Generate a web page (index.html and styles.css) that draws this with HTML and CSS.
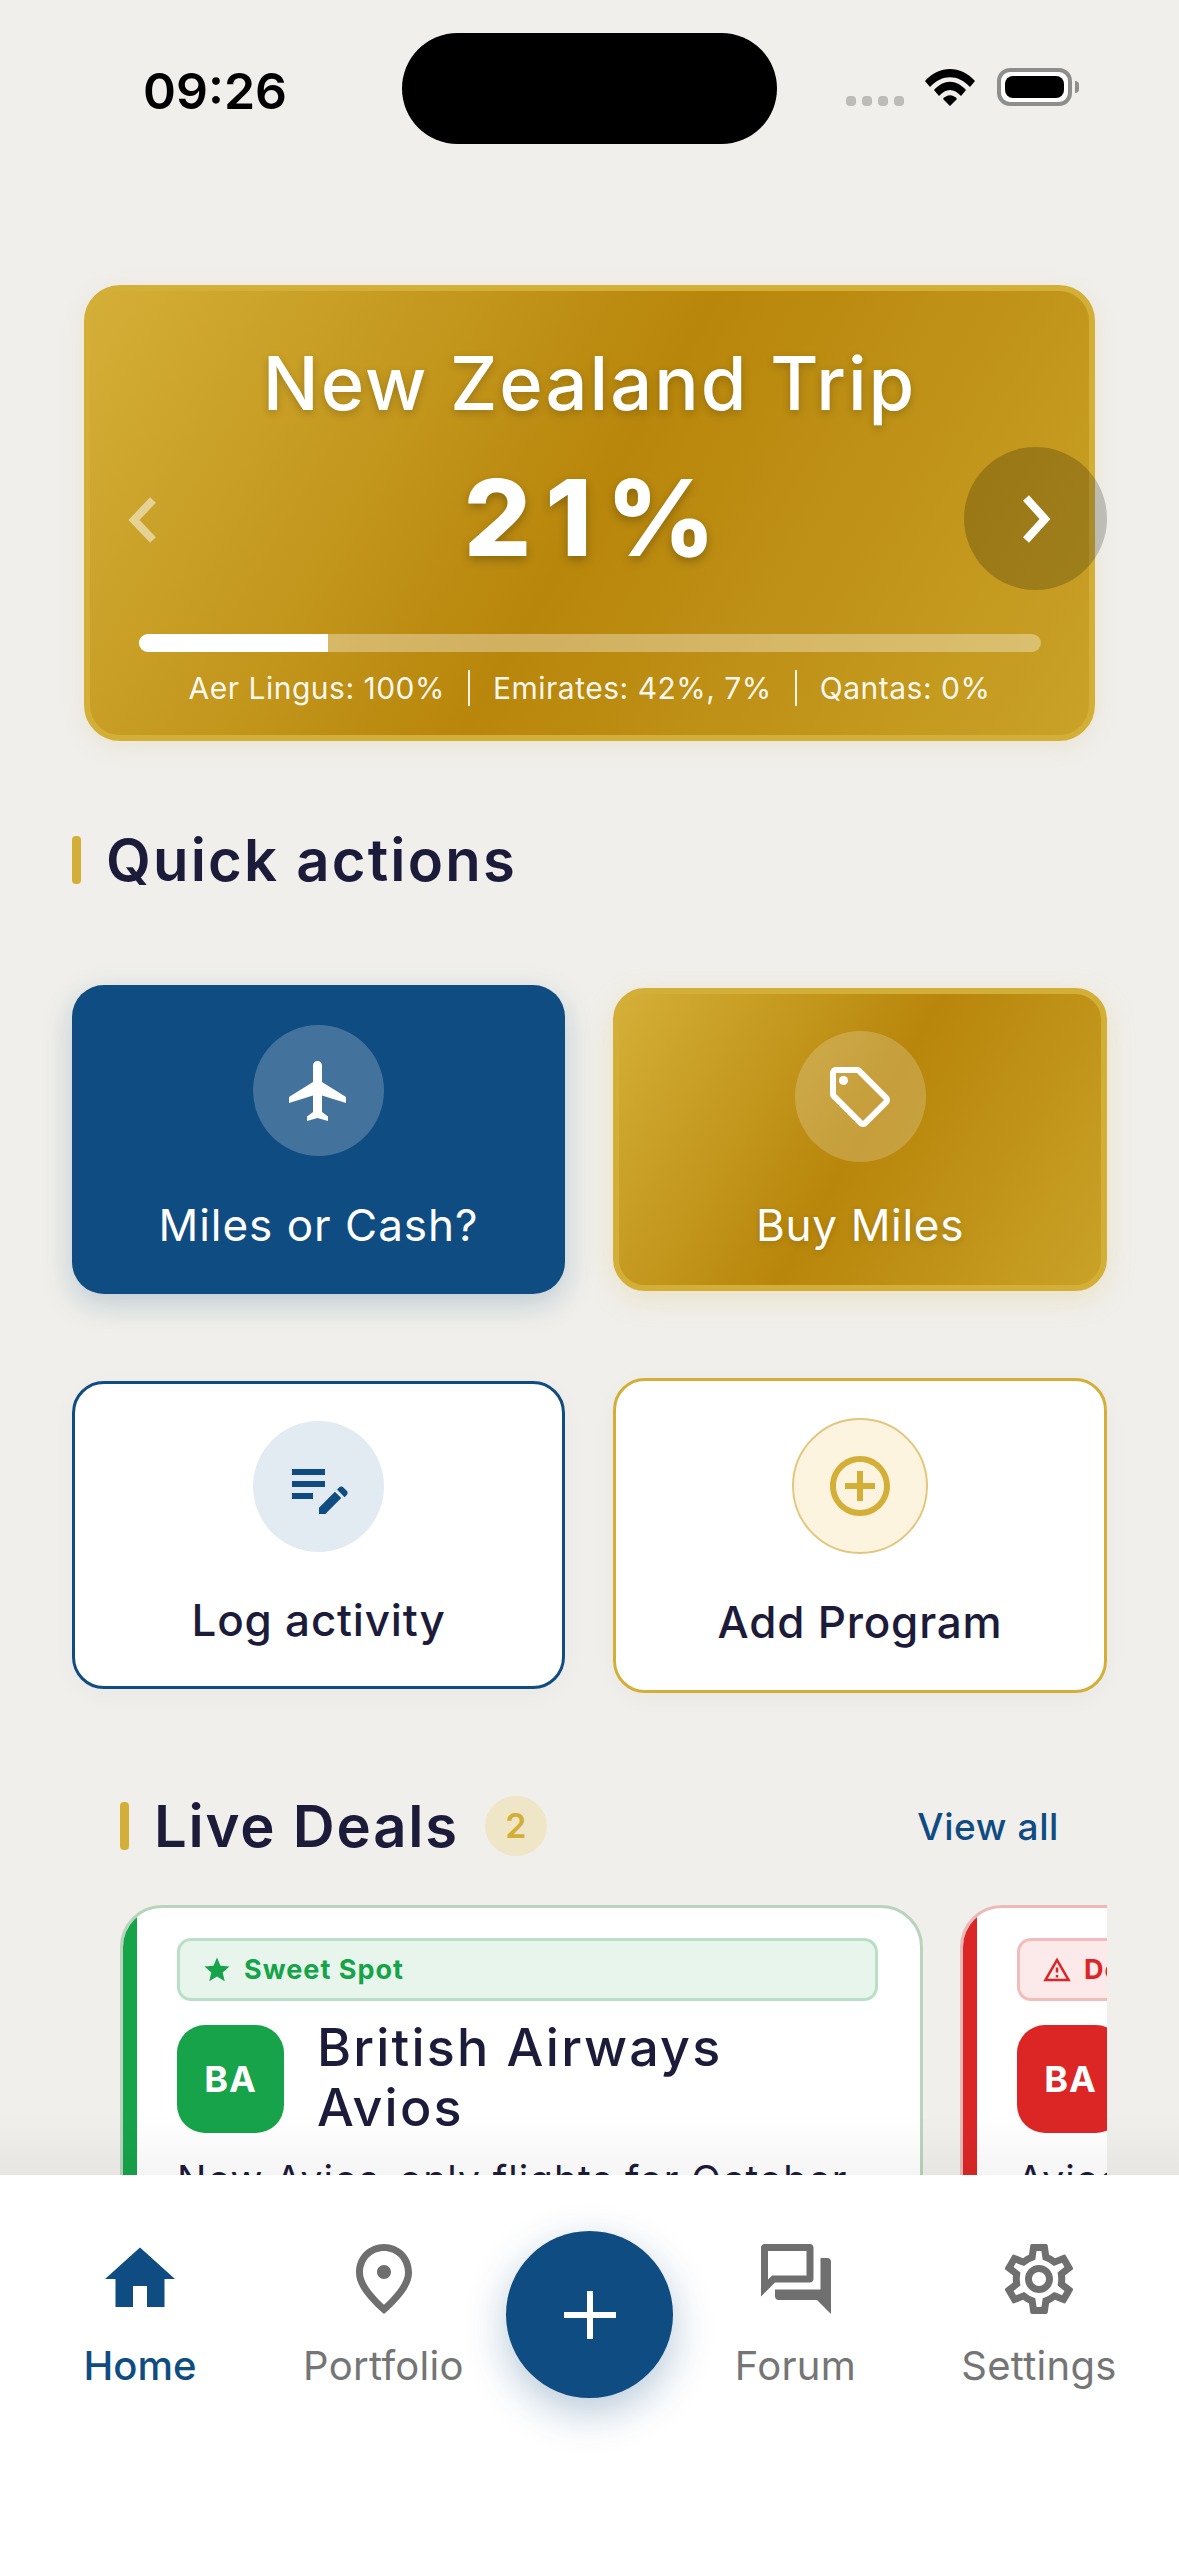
FILE: index.html
```html
<!DOCTYPE html>
<html lang="en">
<head>
    <meta charset="UTF-8">
    <meta name="viewport" content="width=device-width, initial-scale=1.0">
    <title>Home</title>
    <link rel="stylesheet" href="styles.css">
</head>
<body>
<div class="screen">

    <!-- Status bar -->
    <div class="status-bar">
        <span class="clock">09:26</span>
        <div class="island"></div>
        <div class="status-icons">
            <div class="signal"><i></i><i></i><i></i><i></i></div>
            <svg class="wifi" viewBox="0 0 50 37">
                <path d="M0 12 C14 -4 36 -4 50 12 L45 18 C33 5 17 5 5 18Z"/>
                <path d="M9 21 C19 10 31 10 41 21 L36 27 C29 19 21 19 14 27Z"/>
                <path d="M18 30 C22 25 28 25 32 30 L25 37Z"/>
            </svg>
            <div class="battery"><div class="battery-fill"></div></div>
            <div class="battery-cap"></div>
        </div>
    </div>

    <main class="content">
        <!-- Trip progress card -->
        <section class="hero gold">
            <svg class="hero-prev" viewBox="0 0 30 48"><path d="M25 4 L6 24 L25 44"/></svg>
            <h2 class="hero-title">New Zealand Trip</h2>
            <div class="hero-percent">21%</div>
            <div class="hero-next">
                <svg viewBox="0 0 30 48"><path d="M5 3 L24 24 L5 45"/></svg>
            </div>
            <div class="progress"><div class="progress-fill" style="width: 21%"></div></div>
            <div class="hero-programs">
                <span>Aer Lingus: 100%</span>
                <span class="sep"></span>
                <span>Emirates: 42%, 7%</span>
                <span class="sep"></span>
                <span>Qantas: 0%</span>
            </div>
        </section>

        <!-- Quick actions -->
        <section class="quick">
            <h2 class="section-title"><span class="accent"></span>Quick actions</h2>
            <div class="action-grid">
                <div class="action action-blue">
                    <div class="action-icon">
                        <svg viewBox="0 0 24 24"><path d="M21 16v-2l-8-5V3.5c0-.83-.67-1.5-1.5-1.5S10 2.67 10 3.5V9l-8 5v2l8-2.5V19l-2 1.5V22l3.5-1 3.5 1v-1.5L13 19v-5.5l8 2.5z"/></svg>
                    </div>
                    <span>Miles or Cash?</span>
                </div>
                <div class="action action-gold gold">
                    <div class="action-icon">
                        <svg viewBox="0 0 24 24"><path d="M21.41 11.58l-9-9C12.05 2.22 11.55 2 11 2H4c-1.1 0-2 .9-2 2v7c0 .55.22 1.05.59 1.42l9 9c.36.36.86.58 1.41.58s1.05-.22 1.41-.59l7-7c.37-.36.59-.86.59-1.41s-.23-1.06-.59-1.42zM13 20.01L4 11V4h7v-.01l9 9-7 7.02z"/><circle cx="6.5" cy="6.5" r="1.5"/></svg>
                    </div>
                    <span>Buy Miles</span>
                </div>
                <div class="action action-log">
                    <div class="action-icon">
                        <svg viewBox="0 0 24 24"><path d="M3 10h11v2H3v-2zm0-2h11V6H3v2zm0 8h7v-2H3v2zm15.01-3.13.71-.71c.39-.39 1.02-.39 1.41 0l1.12 1.12c.39.39.39 1.02 0 1.41l-.71.71-2.53-2.53zm-.71.71L12 18.88V21h2.12l5.3-5.3-2.12-2.12z"/></svg>
                    </div>
                    <span>Log activity</span>
                </div>
                <div class="action action-add">
                    <div class="action-icon">
                        <svg viewBox="0 0 24 24"><path d="M13 7h-2v4H7v2h4v4h2v-4h4v-2h-4V7zm-1-5C6.48 2 2 6.48 2 12s4.48 10 10 10 10-4.48 10-10S17.52 2 12 2zm0 18c-4.41 0-8-3.59-8-8s3.59-8 8-8 8 3.59 8 8-3.59 8-8 8z"/></svg>
                    </div>
                    <span>Add Program</span>
                </div>
            </div>
        </section>

        <!-- Live deals -->
        <section class="deals">
            <div class="deals-header">
                <h2 class="section-title"><span class="accent"></span>Live Deals<span class="count">2</span></h2>
                <a class="view-all">View all</a>
            </div>
            <div class="deal-row">
                <div class="deal deal-green">
                    <div class="deal-tag">
                        <svg viewBox="0 0 24 24"><path d="M12 17.27 18.18 21l-1.64-7.03L22 9.24l-7.19-.61L12 2 9.19 8.63 2 9.24l5.46 4.73L5.82 21z"/></svg>
                        Sweet Spot
                    </div>
                    <div class="deal-head">
                        <div class="deal-logo">BA</div>
                        <div class="deal-name">British Airways Avios</div>
                    </div>
                    <p class="deal-text">New Avios-only flights for October</p>
                </div>
                <div class="deal deal-red">
                    <div class="deal-tag">
                        <svg viewBox="0 0 24 24"><path d="M12 5.99 19.53 19H4.47L12 5.99M12 2 1 21h22L12 2zm1 14h-2v2h2v-2zm0-6h-2v4h2v-4z"/></svg>
                        Devaluation
                    </div>
                    <div class="deal-head">
                        <div class="deal-logo">BA</div>
                        <div class="deal-name">British Airways Avios</div>
                    </div>
                    <p class="deal-text">Avios prices rise</p>
                </div>
            </div>
        </section>
    </main>

    <!-- Bottom navigation -->
    <nav class="tabbar">
        <div class="tab tab-active">
            <svg viewBox="0 0 24 24"><path d="M10 20v-6h4v6h5v-8h3L12 3 2 12h3v8z"/></svg>
            <span>Home</span>
        </div>
        <div class="tab">
            <svg viewBox="0 0 24 24"><path d="M12 12c-1.1 0-2-.9-2-2s.9-2 2-2 2 .9 2 2-.9 2-2 2zm6-1.8C18 6.57 15.35 4 12 4s-6 2.57-6 6.2c0 2.34 1.95 5.44 6 9.14 4.05-3.7 6-6.8 6-9.14zM12 2c4.2 0 8 3.22 8 8.2 0 3.32-2.67 7.25-8 11.8-5.33-4.55-8-8.48-8-11.8C4 5.22 7.8 2 12 2z"/></svg>
            <span>Portfolio</span>
        </div>
        <div class="fab">
            <svg viewBox="0 0 52 48"><path d="M26 0v48M0 24h52"/></svg>
        </div>
        <div class="tab">
            <svg viewBox="0 0 24 24"><path d="M15 4v7H5.17L4 12.17V4h11m1-2H3c-.55 0-1 .45-1 1v14l4-4h10c.55 0 1-.45 1-1V3c0-.55-.45-1-1-1zm5 4h-2v9H6v2c0 .55.45 1 1 1h11l4 4V7c0-.55-.45-1-1-1z"/></svg>
            <span>Forum</span>
        </div>
        <div class="tab">
            <svg viewBox="0 0 24 24"><path d="M19.43 12.98c.04-.32.07-.64.07-.98 0-.34-.03-.66-.07-.98l2.11-1.65c.19-.15.24-.42.12-.64l-2-3.46c-.09-.16-.26-.25-.44-.25-.06 0-.12.01-.17.03l-2.49 1c-.52-.4-1.08-.73-1.69-.98l-.38-2.65C14.46 2.18 14.25 2 14 2h-4c-.25 0-.46.18-.49.42l-.38 2.65c-.61.25-1.17.59-1.69.98l-2.49-1c-.06-.02-.12-.03-.18-.03-.17 0-.34.09-.43.25l-2 3.46c-.13.22-.07.49.12.64l2.11 1.65c-.04.32-.07.65-.07.98 0 .33.03.66.07.98l-2.11 1.65c-.19.15-.24.42-.12.64l2 3.46c.09.16.26.25.44.25.06 0 .12-.01.17-.03l2.49-1c.52.4 1.08.73 1.69.98l.38 2.65c.03.24.24.42.49.42h4c.25 0 .46-.18.49-.42l.38-2.65c.61-.25 1.17-.59 1.69-.98l2.49 1c.06.02.12.03.18.03.17 0 .34-.09.43-.25l2-3.46c.12-.22.07-.49-.12-.64l-2.11-1.65zm-1.98-1.71c.04.31.05.52.05.73 0 .21-.02.43-.05.73l-.14 1.13.89.7 1.08.84-.7 1.21-1.27-.51-1.04-.42-.9.68c-.43.32-.84.56-1.25.73l-1.06.43-.16 1.13-.2 1.35h-1.4l-.19-1.35-.16-1.13-1.06-.43c-.43-.18-.83-.41-1.23-.71l-.91-.7-1.06.43-1.27.51-.7-1.21 1.08-.84.89-.7-.14-1.13c-.03-.31-.05-.54-.05-.74s.02-.43.05-.73l.14-1.13-.89-.7-1.08-.84.7-1.21 1.27.51 1.04.42.9-.68c.43-.32.84-.56 1.25-.73l1.06-.43.16-1.13.2-1.35h1.39l.19 1.35.16 1.13 1.06.43c.43.18.83.41 1.23.71l.91.7 1.06-.43 1.27-.51.7 1.21-1.07.85-.89.7.14 1.13zM12 8c-2.21 0-4 1.79-4 4s1.79 4 4 4 4-1.79 4-4-1.79-4-4-4zm0 6c-1.1 0-2-.9-2-2s.9-2 2-2 2 .9 2 2-.9 2-2 2z"/></svg>
            <span>Settings</span>
        </div>
    </nav>

</div>
</body>
</html>
```

FILE: styles.css
```css
body {
    margin: 0;
    font-family: Inter, "Liberation Sans", sans-serif;
    background-color: #f0efeb;
}

.screen {
    display: flex;
    flex-direction: column;
    width: 1179px;
    height: 2556px;
    overflow: hidden;
    background-color: #f0efeb;
}

/* Status bar */
.status-bar {
    display: flex;
    flex: none;
    align-items: flex-start;
    box-sizing: border-box;
    height: 177px;
    padding-top: 33px;
}

.clock {
    width: 259px;
    padding-left: 143px;
    box-sizing: border-box;
    margin-top: 28px;
    font-size: 50px;
    line-height: 60px;
    font-weight: 600;
    color: #000;
}

.island {
    width: 375px;
    height: 111px;
    margin-left: 143px;
    border-radius: 56px;
    background-color: #000;
}

.status-icons {
    display: flex;
    align-items: flex-end;
    height: 73px;
    margin-left: 69px;
}

.signal {
    display: flex;
    gap: 6px;
    margin-right: 21px;
}

.signal i {
    width: 10px;
    height: 10px;
    border-radius: 4px;
    background-color: #bdbcb8;
}

.wifi {
    width: 50px;
    height: 37px;
    margin-right: 22px;
    fill: #000;
}

.battery {
    width: 75px;
    height: 38px;
    padding: 4px;
    box-sizing: border-box;
    border: 4px solid #8e8e8c;
    border-radius: 13px;
    background-color: #fff;
}

.battery-fill {
    height: 100%;
    border-radius: 8px;
    background-color: #000;
}

.battery-cap {
    width: 4px;
    height: 12px;
    margin: 0 0 13px 3px;
    border-radius: 0 4px 4px 0;
    background-color: #8e8e8c;
}

/* Shared */
.gold {
    background: linear-gradient(120deg, #d4af37 0%, #b8860b 50%, #c9a227 100%);
    border: 6px solid #d4af37;
    box-sizing: border-box;
}

.content {
    position: relative;
    flex: 1;
    min-height: 0;
    overflow: hidden;
}

/* darkening just above the tab bar */
.content::after {
    content: "";
    position: absolute;
    left: 0;
    right: 0;
    bottom: 0;
    height: 60px;
    background: linear-gradient(rgba(0, 0, 0, 0), rgba(0, 0, 0, 0.04));
}

/* Hero */
.hero {
    position: relative;
    display: flex;
    flex-direction: column;
    align-items: center;
    width: 1011px;
    height: 456px;
    margin: 108px 0 0 84px;
    border-radius: 36px;
    color: #fff;
    box-shadow: 0 6px 24px rgba(184, 134, 11, 0.1);
}

.hero-title {
    margin: 50px 0 0;
    font-size: 74px;
    line-height: 84px;
    font-weight: 500;
    letter-spacing: 2px;
    text-shadow: 0 3px 8px rgba(0, 0, 0, 0.2);
}

.hero-percent {
    margin-top: 35px;
    padding-left: 14px;
    font-size: 106px;
    line-height: 116px;
    font-weight: 800;
    letter-spacing: 14px;
    text-shadow: 0 4px 10px rgba(0, 0, 0, 0.25);
}

.hero-prev {
    position: absolute;
    left: 38px;
    top: 205px;
    width: 30px;
    height: 48px;
    fill: none;
    stroke: rgba(255, 255, 255, 0.5);
    stroke-width: 8;
}

.hero-next {
    position: absolute;
    right: -18px;
    top: 156px;
    display: flex;
    align-items: center;
    justify-content: center;
    width: 143px;
    height: 143px;
    border-radius: 50%;
    background-color: rgba(0, 0, 0, 0.2);
}

.hero-next svg {
    width: 30px;
    height: 48px;
    fill: none;
    stroke: #fff;
    stroke-width: 8;
}

.progress {
    width: 902px;
    height: 18px;
    margin-top: 58px;
    border-radius: 9px;
    overflow: hidden;
    background-color: rgba(255, 255, 255, 0.35);
}

.progress-fill {
    height: 100%;
    background-color: #fff;
}

.hero-programs {
    display: flex;
    align-items: center;
    gap: 23px;
    margin-top: 16px;
    font-size: 30px;
    line-height: 40px;
    letter-spacing: 0.5px;
    color: rgba(255, 255, 255, 0.95);
}

.sep {
    width: 2px;
    height: 36px;
    background-color: rgba(255, 255, 255, 0.9);
}

/* Section headers */
.section-title {
    display: flex;
    align-items: center;
    margin: 0;
    font-size: 58px;
    line-height: 68px;
    font-weight: 600;
    letter-spacing: 2.2px;
    color: #1c1b3a;
}

.accent {
    width: 9px;
    height: 48px;
    margin-right: 25px;
    border-radius: 4px;
    background-color: #d4af37;
}

/* Quick actions */
.quick {
    padding: 85px 72px 0;
}

.action-grid {
    display: grid;
    grid-template-columns: 493px 494px;
    grid-template-rows: 396px 316px;
    column-gap: 48px;
    margin-top: 91px;
}

.action {
    display: flex;
    flex-direction: column;
    align-items: center;
    box-sizing: border-box;
    height: 309px;
    padding-top: 40px;
    border-radius: 32px;
    font-size: 44px;
    line-height: 54px;
    font-weight: 500;
    letter-spacing: 0.8px;
}

.action span {
    margin-top: 42px;
}

.action-icon {
    display: flex;
    align-items: center;
    justify-content: center;
    box-sizing: border-box;
    width: 131px;
    height: 131px;
    border-radius: 50%;
}

.action-icon svg {
    width: 72px;
    height: 72px;
}

.action-blue {
    background-color: #0f4c81;
    color: #fff;
    font-weight: 400;
    letter-spacing: 1px;
    box-shadow: 0 10px 30px rgba(15, 76, 129, 0.22);
}

.action-blue .action-icon {
    background-color: rgba(255, 255, 255, 0.22);
    fill: #fff;
}

.action-gold {
    height: 303px;
    margin-top: 3px;
    padding-top: 37px;
    color: #fff;
    font-weight: 400;
    letter-spacing: 0.7px;
    box-shadow: 0 8px 30px rgba(212, 175, 55, 0.2);
}

.action-gold .action-icon {
    background-color: rgba(255, 255, 255, 0.2);
    fill: #fff;
}

.action-gold span {
    margin-top: 36px;
    text-shadow: 0 2px 6px rgba(0, 0, 0, 0.15);
}

.action-log {
    height: 308px;
    padding-top: 37px;
    border: 3px solid #0f4c81;
    background-color: #fff;
    color: #1c1b3a;
    box-shadow: 0 6px 24px rgba(0, 0, 0, 0.03);
}

.action-log .action-icon {
    background-color: #e2eaf2;
    fill: #0f4c81;
}

.action-log span {
    margin-top: 41px;
}

.action-add {
    height: 315px;
    margin-top: -3px;
    padding-top: 37px;
    border: 3px solid #d4af37;
    background-color: #fff;
    color: #1c1b3a;
    box-shadow: 0 6px 24px rgba(0, 0, 0, 0.03);
}

.action-add .action-icon {
    width: 136px;
    height: 136px;
    border: 2px solid #e2c67c;
    background-color: #fdf4e0;
    fill: #d4af37;
}

.action-add span {
    margin-top: 41px;
}

/* Live deals */
.deals {
    padding: 0 72px 0 120px;
}

.deals-header {
    display: flex;
    align-items: center;
    justify-content: space-between;
    padding-right: 48px;
    margin-top: 95px;
}

.deals-header .section-title {
    letter-spacing: 1.8px;
}

.count {
    display: flex;
    align-items: center;
    justify-content: center;
    width: 62px;
    height: 60px;
    margin-left: 26px;
    border-radius: 50%;
    background-color: #efe6c8;
    font-size: 34px;
    font-weight: 600;
    letter-spacing: 0;
    color: #d4af37;
}

.view-all {
    font-size: 37px;
    font-weight: 500;
    letter-spacing: 0.6px;
    color: #0f4c81;
}

.deal-row {
    display: flex;
    gap: 37px;
    margin-top: 45px;
    overflow: hidden;
}

.deal {
    position: relative;
    flex: none;
    box-sizing: border-box;
    width: 803px;
    height: 420px;
    padding: 30px 42px 0 54px;
    overflow: hidden;
    border: 3px solid;
    border-radius: 42px;
    background-color: #fff;
}

/* colour strip on the left edge */
.deal::before {
    content: "";
    position: absolute;
    left: 0;
    top: 0;
    bottom: 0;
    width: 14px;
}

.deal-green {
    border-color: #b8d4bc;
}

.deal-green::before {
    background-color: #16a34a;
}

.deal-red {
    border-color: #ecb9b9;
}

.deal-red::before {
    background-color: #dc2626;
}

.deal-tag {
    display: flex;
    align-items: center;
    gap: 12px;
    box-sizing: border-box;
    height: 63px;
    padding-left: 22px;
    border: 3px solid;
    border-radius: 14px;
    font-size: 27px;
    font-weight: 700;
    letter-spacing: 1px;
}

.deal-tag svg {
    width: 30px;
    height: 30px;
    fill: currentColor;
}

.deal-green .deal-tag {
    border-color: #b9e0c6;
    background-color: #e8f5ec;
    color: #16a34a;
}

.deal-red .deal-tag {
    border-color: #f3bcbc;
    background-color: #fce9e9;
    color: #dc2626;
}

.deal-head {
    display: flex;
    gap: 33px;
    margin-top: 24px;
}

.deal-logo {
    display: flex;
    flex: none;
    align-items: center;
    justify-content: center;
    width: 107px;
    height: 108px;
    border-radius: 28px;
    font-size: 36px;
    font-weight: 700;
    letter-spacing: 1px;
    color: #fff;
}

.deal-green .deal-logo {
    background-color: #16a34a;
}

.deal-red .deal-logo {
    background-color: #dc2626;
}

.deal-name {
    margin-top: -7px;
    width: 440px;
    font-size: 52px;
    line-height: 60px;
    font-weight: 500;
    letter-spacing: 2.2px;
    color: #1c1b3a;
}

.deal-text {
    margin: 17px 0 0;
    font-size: 39px;
    line-height: 50px;
    letter-spacing: 1px;
    white-space: nowrap;
    color: #1c1b3a;
}

/* Bottom navigation */
.tabbar {
    display: grid;
    grid-template-columns: 280px 207px 205px 207px 280px;
    flex: none;
    height: 381px;
    padding-top: 56px;
    box-sizing: border-box;
    background-color: #fff;
}

.tab {
    display: flex;
    flex-direction: column;
    align-items: center;
    padding-top: 6px;
    color: #757575;
    fill: #6f6f6f;
    font-size: 40px;
    letter-spacing: 0.3px;
}

.tab svg {
    flex: none;
    width: 84px;
    height: 84px;
}

.tab span {
    margin-top: 20px;
    line-height: 50px;
    white-space: nowrap;
}

.tab-active {
    color: #0f4c81;
    fill: #0f4c81;
    font-weight: 500;
    letter-spacing: 0;
}

.fab {
    display: flex;
    align-items: center;
    justify-content: center;
    justify-self: center;
    width: 167px;
    height: 167px;
    border-radius: 50%;
    background-color: #0f4c81;
    box-shadow: 0 14px 40px rgba(15, 76, 129, 0.3);
}

.fab svg {
    width: 52px;
    height: 48px;
    fill: none;
    stroke: #fff;
    stroke-width: 6;
}
```
